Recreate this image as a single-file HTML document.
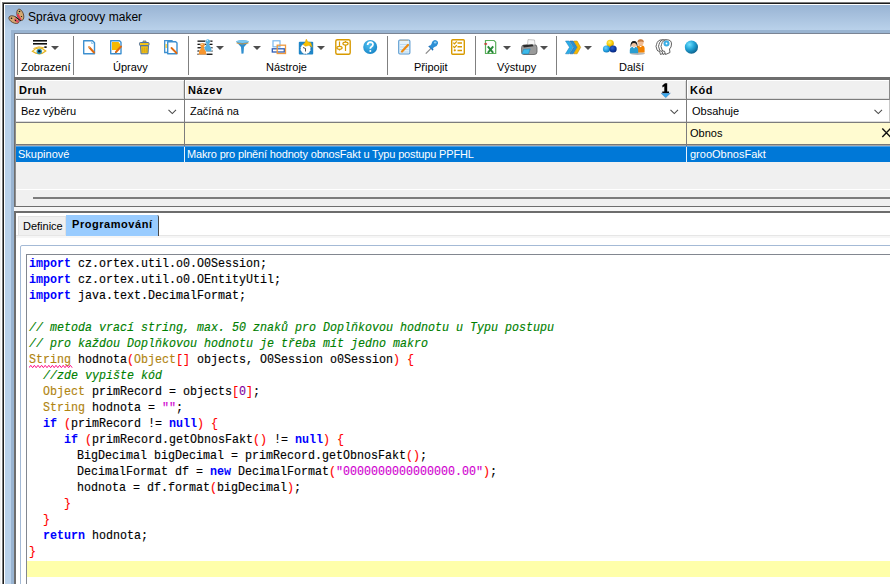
<!DOCTYPE html>
<html><head><meta charset="utf-8">
<style>
*{margin:0;padding:0;box-sizing:border-box}
html,body{width:890px;height:584px;overflow:hidden;background:#fff;font-family:"Liberation Sans",sans-serif;font-size:11px;color:#000}
.a{position:absolute}
.t{position:absolute;white-space:pre;line-height:12px}
.code{position:absolute;left:30px;font-family:"Liberation Mono",monospace;font-size:13px;transform:scaleX(0.8974);transform-origin:0 0;white-space:pre;line-height:16px;color:#000;-webkit-text-stroke:0.15px currentColor}
.kw{color:#0000ff;font-weight:bold;-webkit-text-stroke:0}
.cm{color:#008000;font-style:italic}
.ty{color:#b08410}
.br{color:#ff0000}
.st{color:#d000d0}
.nm{color:#8000a0}
</style></head><body>
<!-- window border -->
<div id="lc" class="a" style="left:0;top:0;width:1px;height:584px;background:#f0f0f0"></div>
<div class="a" style="left:2px;top:2px;width:888px;height:582px;background:#7a7a7a"></div>
<div class="a" style="left:3px;top:3px;width:887px;height:581px;background:#1c1c1c"></div>
<div class="a" style="left:4px;top:4px;width:886px;height:580px;background:#fff"></div>
<div class="a" style="left:5px;top:5px;width:885px;height:579px;background:#b9d1ea"></div>
<!-- title gradient -->
<div class="a" style="left:5px;top:5px;width:885px;height:25px;background:linear-gradient(#99b4d4,#b9d1ea)"></div>
<div class="t" style="left:28px;top:10px;font-size:12px;line-height:14px;color:#000">Správa groovy maker</div>
<!-- butterfly icon -->
<svg class="a" style="left:0;top:0" width="30" height="30" viewBox="0 0 30 30">
<ellipse cx="20.3" cy="14.8" rx="3.2" ry="5.8" transform="rotate(-18 20.3 14.8)" fill="#d4a870" stroke="#4a3020" stroke-width="0.7"/>
<ellipse cx="14" cy="19.6" rx="5.6" ry="3.2" transform="rotate(28 14 19.6)" fill="#d4a870" stroke="#4a3020" stroke-width="0.7"/>
<path d="M18 13 L21.5 19.5 L20 20.5 L16.5 15z" fill="#e03850"/>
<path d="M15 18 L19 21.5 L17.5 23 L14 20z" fill="#e04860"/>
<path d="M15.5 17 L21 21" stroke="#1a1010" stroke-width="1"/>
<g fill="#111"><circle cx="19.5" cy="11.5" r="0.8"/><circle cx="11.5" cy="18.3" r="0.8"/><circle cx="15.5" cy="20.5" r="0.7"/><circle cx="21.5" cy="16.5" r="0.6"/></g>
<circle cx="18.5" cy="13.5" r="0.6" fill="#30a040"/>
</svg>
<!-- inner darker blue band -->
<div class="a" style="left:11px;top:30px;width:879px;height:554px;background:#99b4d1"></div>
<!-- toolbar -->
<div class="a" style="left:14px;top:33px;width:876px;height:44px;background:#7a8494"></div>
<div class="a" style="left:15px;top:34px;width:875px;height:43px;background:#fff"></div>
<!-- separators -->
<div class="a" style="left:17px;top:36px;width:1px;height:39px;background:#808080"></div>
<div class="a" style="left:73px;top:36px;width:1px;height:39px;background:#808080"></div>
<div class="a" style="left:188px;top:36px;width:1px;height:39px;background:#808080"></div>
<div class="a" style="left:387px;top:36px;width:1px;height:39px;background:#808080"></div>
<div class="a" style="left:475px;top:36px;width:1px;height:39px;background:#808080"></div>
<div class="a" style="left:556px;top:36px;width:1px;height:39px;background:#808080"></div>
<!-- labels -->
<div class="t" style="left:21px;top:61px">Zobrazení</div>
<div class="t" style="left:113px;top:61px">Úpravy</div>
<div class="t" style="left:266px;top:61px">Nástroje</div>
<div class="t" style="left:414px;top:61px">Připojit</div>
<div class="t" style="left:497px;top:61px">Výstupy</div>
<div class="t" style="left:619px;top:61px">Další</div>
<!--ICONS-->
<svg class="a" style="left:0;top:0" width="890" height="80" viewBox="0 0 890 80">
<defs>
<linearGradient id="gb" x1="0" y1="0" x2="0" y2="1"><stop offset="0" stop-color="#5cc8f5"/><stop offset="1" stop-color="#1a7fc0"/></linearGradient>
<radialGradient id="glb" cx="0.35" cy="0.3" r="0.75"><stop offset="0" stop-color="#6fe0ff"/><stop offset="0.5" stop-color="#21a3d6"/><stop offset="1" stop-color="#0c5f8a"/></radialGradient>
<radialGradient id="hlp" cx="0.4" cy="0.35" r="0.7"><stop offset="0" stop-color="#4fc0f0"/><stop offset="1" stop-color="#1683c6"/></radialGradient>
</defs>
<!-- dropdown triangles -->
<g fill="#4e4e4e">
<path d="M51 46h8l-4 4z"/>
<path d="M216 46h8l-4 4z"/>
<path d="M253 46h8l-4 4z"/>
<path d="M317 46h8l-4 4z"/>
<path d="M503 46h8l-4 4z"/>
<path d="M540 46h8l-4 4z"/>
<path d="M584 46h8l-4 4z"/>
</g>
<!-- eye with lines -->
<rect x="33" y="40" width="14" height="1.6" fill="#111"/>
<rect x="33" y="43" width="14" height="1.6" fill="#111"/>
<rect x="44.2" y="46.2" width="2.6" height="1.7" rx="0.6" fill="#1a1a1a"/>
<path d="M32.3 51.3 Q38.5 44.8 45.8 51 Q39.5 56.5 32.3 51.3Z" fill="#fffbe8" stroke="#e6b422" stroke-width="1.2"/>
<path d="M33.5 48.5 Q39 45.5 44 47.8" fill="none" stroke="#e8b830" stroke-width="1"/>
<circle cx="39.3" cy="51.5" r="2.7" fill="#2a90b8"/>
<circle cx="39.3" cy="51.3" r="1.3" fill="#081820"/>
<!-- new doc -->
<path d="M83.7 40.7h8.8l2 2v11h-10.8z" fill="#fff" stroke="#3d90d0" stroke-width="1.4" stroke-linejoin="round"/>
<path d="M91.5 41.5v2h2" fill="#bfe0f5" stroke="#8cc4ea" stroke-width="0.8"/>
<path d="M89 47 l5 5.5" stroke="#e06a10" stroke-width="2" stroke-linecap="round"/>
<path d="M88.5 46.5 l1 1" stroke="#f5d0a0" stroke-width="1.5"/>
<!-- edit doc -->
<path d="M110.7 40.7h8.8l1.5 1.5v11.5h-10.3z" fill="#fff" stroke="#3d90d0" stroke-width="1.4" stroke-linejoin="round"/>
<path d="M112 42h6.5l1.5 2v4l-3 2h-5z" fill="#f7b900"/>
<path d="M121 46.5 l-5 5.5" stroke="#e06a10" stroke-width="2" stroke-linecap="round"/>
<path d="M115.5 52.5 l-0.8 0.8" stroke="#555" stroke-width="1"/>
<!-- trash -->
<path d="M143 41h3v1.5h-3z" fill="#f2c21a" stroke="#4a70a8" stroke-width="0.8"/>
<rect x="139.5" y="42.5" width="9.5" height="3" rx="0.8" fill="#f2c21a" stroke="#4a70a8" stroke-width="1"/>
<path d="M140.5 45.8h8l-0.5 8h-7z" fill="#f2c21a" stroke="#4a70a8" stroke-width="1"/>
<path d="M142.8 47.5v5M144.8 47.5v5M146.8 47.5v5" stroke="#c89810" stroke-width="0.7"/>
<!-- copy doc -->
<path d="M164.7 40.7h7.3v11.8h-7.3z" fill="#fff" stroke="#3d90d0" stroke-width="1.3"/>
<rect x="165.5" y="44" width="1.2" height="4" fill="#f2c21a"/>
<path d="M167.7 41.7h8l1.3 1.3v10.7h-9.3z" fill="#fff" stroke="#3d90d0" stroke-width="1.4" stroke-linejoin="round"/>
<path d="M171.5 48 l5 5" stroke="#e06a10" stroke-width="1.8" stroke-linecap="round"/>
<!-- people with lines -->
<g fill="#111"><rect x="197.5" y="40.5" width="15" height="1.3"/><rect x="197.5" y="43.7" width="15" height="1.3"/><rect x="197.5" y="47.1" width="15" height="1.3"/><rect x="197.5" y="50.4" width="15" height="1.3"/><rect x="197.5" y="53.6" width="15" height="1.3"/></g>
<path d="M207.8 39.3 a2.2 2.2 0 0 1 1.2 4.1 Q209.0 44.8 210.0 45.9 Q211.60000000000002 47.3 211.60000000000002 51.3 H204.0 Q204.0 47.3 205.60000000000002 45.9 Q206.60000000000002 44.8 206.60000000000002 43.4 A2.2 2.2 0 0 1 207.8 39.3Z" fill="#56b0e0" stroke="#fff" stroke-width="0.7" paint-order="stroke"/><circle cx="207.3" cy="40.599999999999994" r="0.8" fill="#c8ecff"/>
<path d="M202.5 43 a2.2 2.2 0 0 1 1.2 4.1 Q203.7 48.5 204.7 49.6 Q206.3 51 206.3 54.6 H198.7 Q198.7 51 200.3 49.6 Q201.3 48.5 201.3 47.1 A2.2 2.2 0 0 1 202.5 43Z" fill="#f7962e" stroke="#fff" stroke-width="0.7" paint-order="stroke"/><circle cx="202.0" cy="44.3" r="0.8" fill="#ffe0c0"/>
<!-- funnel -->
<path d="M236 41.5 Q242.5 39 249 41.5 L244 47 L243.5 53.5 L241.5 53.8 L241 47Z" fill="#2f8fd0"/>
<ellipse cx="242.5" cy="41.6" rx="6.3" ry="1.4" fill="#7cc8f0"/>
<path d="M236.5 43 Q242.5 45 248.5 43" fill="none" stroke="#d89a40" stroke-width="0.9"/>
<!-- monitors -->
<rect x="273" y="40.8" width="7" height="6" fill="#fff" stroke="#7ab8ee" stroke-width="1.2"/>
<rect x="272.3" y="48.8" width="12" height="3.2" fill="#fff" stroke="#2c5cb8" stroke-width="1.3"/>
<rect x="277.2" y="45.2" width="8.3" height="8.3" fill="none" stroke="#ef9a40" stroke-width="1.3"/>
<!-- clock -->
<rect x="298.8" y="41.7" width="14.4" height="12.8" rx="1" fill="#1e86c8"/>
<circle cx="305.6" cy="48.8" r="5.2" fill="#fff"/><circle cx="305.6" cy="48.8" r="5.2" fill="none" stroke="#114a80" stroke-width="0.6" stroke-dasharray="1 1.6"/>
<path d="M305.5 48.5 l-2.5 -1 M305.5 48.5 v3" stroke="#222" stroke-width="0.8"/>
<path d="M306.3 39 L307.8 41.8 L310.8 42.8 L312.3 47.2 L309.5 45.3 L305.5 46.3 L303 44.5 L305 42.5 Z" fill="#f8c000" stroke="#e0a000" stroke-width="0.4"/>
<!-- sliders -->
<rect x="335.8" y="39.8" width="14.4" height="14.4" rx="1.5" fill="#fff" stroke="#d89a00" stroke-width="1.4"/>
<path d="M339.5 41.5v9M345.5 41v10" stroke="#d89a00" stroke-width="1.2"/>
<ellipse cx="339.5" cy="47.8" rx="2.6" ry="1.5" fill="#fff" stroke="#d89a00" stroke-width="1.2"/>
<ellipse cx="345.5" cy="43.6" rx="2.6" ry="1.5" fill="#fff" stroke="#d89a00" stroke-width="1.2"/>
<!-- help -->
<circle cx="370.2" cy="47" r="7" fill="url(#hlp)"/>
<path d="M367.6 45 Q367.8 42.2 370.4 42.2 Q373 42.3 373 44.6 Q373 46 371.2 47 Q370.3 47.6 370.3 48.8" fill="none" stroke="#fff" stroke-width="1.7"/>
<circle cx="370.3" cy="51" r="1" fill="#fff"/>
<!-- notepad -->
<rect x="398.7" y="40" width="11.2" height="14" rx="1.2" fill="#e4f2fb" stroke="#5a9ad0" stroke-width="1.1"/>
<path d="M400 44.5h8.5M400 47h8.5M400 49.5h8.5M400 52h8.5" stroke="#a8d0ee" stroke-width="0.7"/>
<path d="M400.5 40.3h7" stroke="#c8a060" stroke-width="1.2" stroke-dasharray="1 1"/>
<path d="M402 51.5 l6 -6.5" stroke="#ee8a10" stroke-width="2.2" stroke-linecap="round"/>
<!-- pin -->
<path d="M425.8 53.6 L431 48.4" stroke="#8a8a8a" stroke-width="1.3"/>
<path d="M430 45.5 L433.5 49 L432.8 50.8 L428.2 46.2Z" fill="#1a6cb5"/>
<path d="M431.5 44 Q432 40.5 435 40 Q438.5 40.5 438 43.5 Q437.5 46 434.5 47 L431.8 49 L429.5 46.5Z" fill="#2d8fd5"/>
<ellipse cx="435.2" cy="42.5" rx="1.4" ry="1" fill="#8fd0f5"/>
<!-- checklist -->
<rect x="451.7" y="39.7" width="12.6" height="14.6" rx="1" fill="#fff" stroke="#d89a00" stroke-width="1.4"/>
<path d="M453.3 42.6l1.2 1.3l2.3 -2.5M453.3 46.3l1.2 1.3l2.3 -2.5" fill="none" stroke="#d89a00" stroke-width="1.3"/>
<circle cx="454.8" cy="50.3" r="1.1" fill="#d89a00"/>
<path d="M457.5 43h4.5M457.5 46.7h4.5M457.5 50.4h4.5" stroke="#d89a00" stroke-width="1.5"/>
<!-- excel -->
<path d="M485.5 40.5h8.5l1.7 1.7v11.3h-10.2z" fill="#fff" stroke="#5aae5a" stroke-width="1.2"/>
<rect x="484.3" y="43.3" width="2.8" height="1.3" fill="#d02020"/>
<path d="M487.8 46.3l5.4 6.5M493.2 46.3l-5.4 6.5" stroke="#2a8a3a" stroke-width="2"/>
<!-- printer -->
<path d="M521.6 47.5 Q521.6 45 524 45 L534 44.5 Q537 44.5 537 47.5 L537 52 Q537 54.5 534 54.5 L524 54.5 Q521.6 54.5 521.6 52 Z" fill="#9a9a9a" stroke="#5a5a5a" stroke-width="0.8"/>
<path d="M528 39.6 L534.5 40 L535 44.8 L527.5 45.2 Z" fill="#f6f6f6" stroke="#a0a0a0" stroke-width="0.6"/>
<path d="M522.8 45.2 L532.5 44.2 L533.5 46.2 L523.8 47.6 Z" fill="#2a2a2a"/>
<path d="M523.6 49.3 L530.2 48.9 L528.6 53.9 L521.8 53.9 Z" fill="#3cbaea" stroke="#1a7ab0" stroke-width="0.5"/>
<!-- chevrons -->
<g stroke-width="0.5" stroke-linejoin="round">
<path d="M565.5 41h3.5l4 6.3l-4 6.5h-3.5l4 -6.5z" fill="#2aaee8" stroke="#1a78b8"/>
<path d="M569.7 41h3.5l4 6.3l-4 6.5h-3.5l4 -6.5z" fill="#2890d4" stroke="#1a5a98"/>
<path d="M573.8 41h3.3l3.6 6.3l-3.6 6.5h-3.3l3.6 -6.5z" fill="#f8ba00" stroke="#b88000"/>
</g>
<!-- three circles -->
<defs>
<radialGradient id="cy" cx="0.4" cy="0.35" r="0.7"><stop offset="0" stop-color="#fff070"/><stop offset="0.6" stop-color="#f5c800"/><stop offset="1" stop-color="#c89000"/></radialGradient>
<radialGradient id="cl" cx="0.4" cy="0.35" r="0.7"><stop offset="0" stop-color="#70d0ff"/><stop offset="0.6" stop-color="#22a0e0"/><stop offset="1" stop-color="#1070b0"/></radialGradient>
<radialGradient id="cd" cx="0.4" cy="0.35" r="0.7"><stop offset="0" stop-color="#3060d0"/><stop offset="0.6" stop-color="#0a3aa0"/><stop offset="1" stop-color="#061e70"/></radialGradient>
</defs>
<circle cx="610.2" cy="43.4" r="3.6" fill="url(#cy)"/>
<circle cx="606.5" cy="49" r="3.6" fill="url(#cl)"/>
<circle cx="613.1" cy="49" r="3.6" fill="url(#cd)"/>
<!-- people -->
<ellipse cx="637.5" cy="53.6" rx="7.5" ry="1.4" fill="#b8b8b8"/>
<path d="M636.5 52.5 V48.5 Q636.5 45.2 640.6 45.2 Q644.6 45.2 644.6 48.5 V52.5z" fill="#f28100"/>
<path d="M639.2 46 L640.6 47.2 L642 46z" fill="#fff"/>
<circle cx="640.6" cy="42.5" r="3" fill="#f0bc94"/>
<path d="M637.5 42.3 Q637.3 39.3 640.6 39.2 Q643.9 39.3 643.8 42.3 Q641.5 40.6 637.5 42.3z" fill="#c47a40"/>
<path d="M629.8 53.3 V50 Q629.8 46.8 634 46.8 Q638.2 46.8 638.2 50 V53.3z" fill="#2a9ed0"/>
<path d="M632.8 47 L634 48.5 L635.2 47z" fill="#fff"/>
<circle cx="634" cy="44.3" r="2.7" fill="#f2c4a0"/>
<path d="M630.5 46.8 Q630.2 41 634 41 Q637.8 41 637.5 46.8 L636.8 46.5 Q637 43.2 634 43 Q631 43.2 631.2 46.5z" fill="#1a1a1a"/>
<!-- heads -->
<path d="M656.5 48 Q655.5 46.5 656.5 44.5 Q657.5 39.8 662.0 39.8 Q666.5 39.8 666.5 44 Q666.5 47.5 664.5 49 L665.0 52.5 L660.5 54.5 L659.5 51.2 Q657.5 51.5 657.1 50 Z" fill="#fff" stroke="#3a3a3a" stroke-width="0.8"/>
<path d="M659 48 Q658 46.5 659 44.5 Q660 39.8 664.5 39.8 Q669 39.8 669 44 Q669 47.5 667 49 L667.5 52.5 L663 54.5 L662 51.2 Q660 51.5 659.6 50 Z" fill="#fff" stroke="#3a3a3a" stroke-width="0.8"/>
<path d="M661.5 48 Q660.5 46.5 661.5 44.5 Q662.5 39.8 667.0 39.8 Q671.5 39.8 671.5 44 Q671.5 47.5 669.5 49 L670.0 52.5 L665.5 54.5 L664.5 51.2 Q662.5 51.5 662.1 50 Z" fill="#fff" stroke="#3a3a3a" stroke-width="0.8"/>
<circle cx="666.5" cy="43.5" r="3" fill="#3aaee6"/>
<circle cx="666.5" cy="43.5" r="0.9" fill="#fff"/>
<!-- globe -->
<circle cx="691.4" cy="47.1" r="6.6" fill="url(#glb)"/>
</svg>
<!--/ICONS-->

<!-- grid -->
<div class="a" style="left:14px;top:77px;width:876px;height:130px;background:#6e6e6e"></div>
<div class="a" style="left:15px;top:80px;width:875px;height:126px;background:#8e8e8e"></div>
<div class="a" style="left:16px;top:80px;width:874px;height:126px;background:#f0f0f0"></div>
<!-- header -->
<div class="a" style="left:16px;top:80px;width:874px;height:1px;background:#fff"></div>
<div class="a" style="left:16px;top:80px;width:1px;height:19px;background:#fff"></div>
<div class="a" style="left:185px;top:80px;width:1px;height:19px;background:#fff"></div>
<div class="a" style="left:687px;top:80px;width:1px;height:19px;background:#fff"></div>
<div class="a" style="left:183px;top:81px;width:1px;height:18px;background:#dadada"></div>
<div class="a" style="left:685px;top:81px;width:1px;height:18px;background:#dadada"></div>
<div class="a" style="left:16px;top:98px;width:874px;height:1px;background:#dcdcdc"></div>
<div class="a" style="left:16px;top:99px;width:874px;height:1px;background:#7c7c7c"></div>
<div class="t" style="left:19px;top:84px;font-weight:bold;letter-spacing:0.55px">Druh</div>
<div class="t" style="left:188px;top:84px;font-weight:bold;letter-spacing:0.55px">Název</div>
<div class="t" style="left:690px;top:84px;font-weight:bold;letter-spacing:0.55px">Kód</div>
<!-- sort indicator -->
<svg class="a" style="left:658px;top:81px" width="16" height="18" viewBox="0 0 16 18">
<path d="M4.3 4.6 L7 2.2 H9.2 V10.4 H11 V12.2 H4.3 V10.4 H6.3 V5.2 L4.5 6.5z" fill="#000"/>
<path d="M3 12.2 H12.4 L7.7 16.8z" fill="#3aa8ec" stroke="#2a5aa0" stroke-width="0.3"/>
</svg>
<!-- filter row -->
<div class="a" style="left:16px;top:100px;width:874px;height:22px;background:#fff"></div>
<div class="a" style="left:16px;top:121px;width:874px;height:1px;background:#dcdcdc"></div>
<div class="a" style="left:16px;top:122px;width:874px;height:1px;background:#7c7c7c"></div>
<div class="t" style="left:21px;top:105px">Bez výběru</div>
<div class="t" style="left:190px;top:105px">Začíná na</div>
<div class="t" style="left:692px;top:105px">Obsahuje</div>
<svg class="a" style="left:0;top:100px" width="890" height="22" viewBox="0 0 890 22">
<path d="M168.5 9.8 L172.3 13.6 L176 9.8 M670.5 9.8 L674.3 13.6 L678 9.8 M874.5 9.8 L878.3 13.6 L882 9.8" fill="none" stroke="#4a4a4a" stroke-width="1.05"/>
</svg>
<!-- yellow row -->
<div class="a" style="left:16px;top:123px;width:874px;height:21px;background:#fffbd0"></div>
<div class="a" style="left:16px;top:144px;width:874px;height:1px;background:#787878"></div>
<div class="a" style="left:16px;top:145px;width:874px;height:1px;background:#a8a8a8"></div>
<div class="t" style="left:690px;top:127px">Obnos</div>
<svg class="a" style="left:878px;top:124px" width="12" height="18" viewBox="0 0 12 18">
<path d="M4.3 4.5 L12.5 13 M12.5 4.5 L4.3 13" stroke="#111" stroke-width="1.4"/>
</svg>
<!-- selected -->
<div class="a" style="left:16px;top:146px;width:874px;height:16px;background:#0078d7"></div>
<div class="a" style="left:16px;top:146px;width:874px;height:1px;background:#4aa0e8"></div>
<div class="t" style="left:18px;top:148px;color:#fff">Skupinové</div>
<div class="t" style="left:187px;top:148px;color:#fff;letter-spacing:-0.165px">Makro pro plnění hodnoty obnosFakt u Typu postupu PPFHL</div>
<div class="t" style="left:690px;top:148px;color:#fff">grooObnosFakt</div>
<!-- column separators -->
<div class="a" style="left:184px;top:80px;width:1px;height:66px;background:#7c7c7c"></div>
<div class="a" style="left:686px;top:80px;width:1px;height:66px;background:#7c7c7c"></div>
<div class="a" style="left:889px;top:80px;width:1px;height:20px;background:#8a8a8a"></div>
<div class="a" style="left:889px;top:100px;width:1px;height:22px;background:#c8c8c8"></div>
<div class="a" style="left:184px;top:147px;width:1px;height:15px;background:#e8f2fb"></div>
<div class="a" style="left:686px;top:147px;width:1px;height:15px;background:#e8f2fb"></div>
<!-- scroll area -->
<div class="a" style="left:16px;top:189px;width:874px;height:1px;background:#fff"></div>
<div class="a" style="left:33px;top:197px;width:857px;height:2px;background:#7c7c7c"></div>
<!-- splitter -->
<div class="a" style="left:14px;top:207px;width:876px;height:4px;background:#f6f6f6"></div>
<!-- bottom panel -->
<div class="a" style="left:14px;top:211px;width:876px;height:373px;background:#6d6d6d"></div>
<div class="a" style="left:16px;top:213px;width:874px;height:371px;background:#fff"></div>
<!-- tabs -->
<div class="a" style="left:16px;top:235px;width:874px;height:1px;background:#e6e6e6"></div>
<div class="a" style="left:16px;top:236px;width:874px;height:2px;background:#f6f6f6"></div>
<div class="a" style="left:18px;top:216px;width:48px;height:19px;background:#f0f0f0;border:1px solid #e2e2e2;border-bottom:none"></div>
<div class="t" style="left:23px;top:220px">Definice</div>
<div class="a" style="left:66px;top:215px;width:93px;height:21px;background:#99ccff;border-right:1px solid #4a4a4a;border-top-right-radius:2px"></div>
<div class="t" style="left:72px;top:218px;font-weight:bold;letter-spacing:0.55px">Programování</div>
<!-- group box -->
<div class="a" style="left:20px;top:245px;width:880px;height:400px;border:1px solid #a4bad6;border-radius:2px"></div>
<!-- editor -->
<div class="a" style="left:26px;top:254px;width:870px;height:340px;background:#fff;border-left:1px solid #828790;border-top:1px solid #828790"></div>
<div class="a" style="left:27px;top:561px;width:863px;height:16px;background:#ffffaa"></div>
<!--CODE-->
<div id="code">
<div class="code" style="top:256px;left:29px"><span class="kw">import</span> cz.ortex.util.o0.O0Session;</div>
<div class="code" style="top:272px;left:29px"><span class="kw">import</span> cz.ortex.util.o0.OEntityUtil;</div>
<div class="code" style="top:288px;left:29px"><span class="kw">import</span> java.text.DecimalFormat;</div>
<div class="code" style="top:320px;left:29px"><span class="cm">// metoda vrací string, max. 50 znaků pro Doplňkovou hodnotu u Typu postupu</span></div>
<div class="code" style="top:336px;left:29px"><span class="cm">// pro každou Doplňkovou hodnotu je třeba mít jedno makro</span></div>
<div class="code" style="top:352px;left:29px"><span class="ty sq">String</span> hodnota<span class="br">(</span><span class="ty">Object</span><span class="br">[]</span> objects, O0Session o0Session<span class="br">)</span> <span class="br">{</span></div>
<div class="code" style="top:368px;left:43px"><span class="cm">//zde vypište kód</span></div>
<div class="code" style="top:384px;left:43px"><span class="ty">Object</span> primRecord = objects<span class="br">[</span><span class="nm">0</span><span class="br">]</span>;</div>
<div class="code" style="top:400px;left:43px"><span class="ty">String</span> hodnota = <span class="st">""</span>;</div>
<div class="code" style="top:416px;left:43px"><span class="kw">if</span> <span class="br">(</span>primRecord != <span class="kw">null</span><span class="br">)</span> <span class="br">{</span></div>
<div class="code" style="top:432px;left:64px"><span class="kw">if</span> <span class="br">(</span>primRecord.getObnosFakt<span class="br">()</span> != <span class="kw">null</span><span class="br">)</span> <span class="br">{</span></div>
<div class="code" style="top:448px;left:77px">BigDecimal bigDecimal = primRecord.getObnosFakt<span class="br">()</span>;</div>
<div class="code" style="top:464px;left:77px">DecimalFormat df = <span class="kw">new</span> DecimalFormat<span class="br">(</span><span class="st">"0000000000000000.00"</span><span class="br">)</span>;</div>
<div class="code" style="top:480px;left:77px">hodnota = df.format<span class="br">(</span>bigDecimal<span class="br">)</span>;</div>
<div class="code" style="top:496px;left:64px"><span class="br">}</span></div>
<div class="code" style="top:512px;left:43px"><span class="br">}</span></div>
<div class="code" style="top:528px;left:43px"><span class="kw">return</span> hodnota;</div>
<div class="code" style="top:544px;left:29px"><span class="br">}</span></div>
</div>
<!--/CODE-->
<svg class="a" style="left:29px;top:364px" width="45" height="5" viewBox="0 0 45 5"><path d="M 0.00 3.7 L 1.80 1.3 L 3.60 3.7 L 5.40 1.3 L 7.20 3.7 L 9.00 1.3 L 10.80 3.7 L 12.60 1.3 L 14.40 3.7 L 16.20 1.3 L 18.00 3.7 L 19.80 1.3 L 21.60 3.7 L 23.40 1.3 L 25.20 3.7 L 27.00 1.3 L 28.80 3.7 L 30.60 1.3 L 32.40 3.7 L 34.20 1.3 L 36.00 3.7 L 37.80 1.3 L 39.60 3.7 L 41.40 1.3 L 43.20 3.7" fill="none" stroke="#ff1088" stroke-width="1"/></svg>

</body></html>
